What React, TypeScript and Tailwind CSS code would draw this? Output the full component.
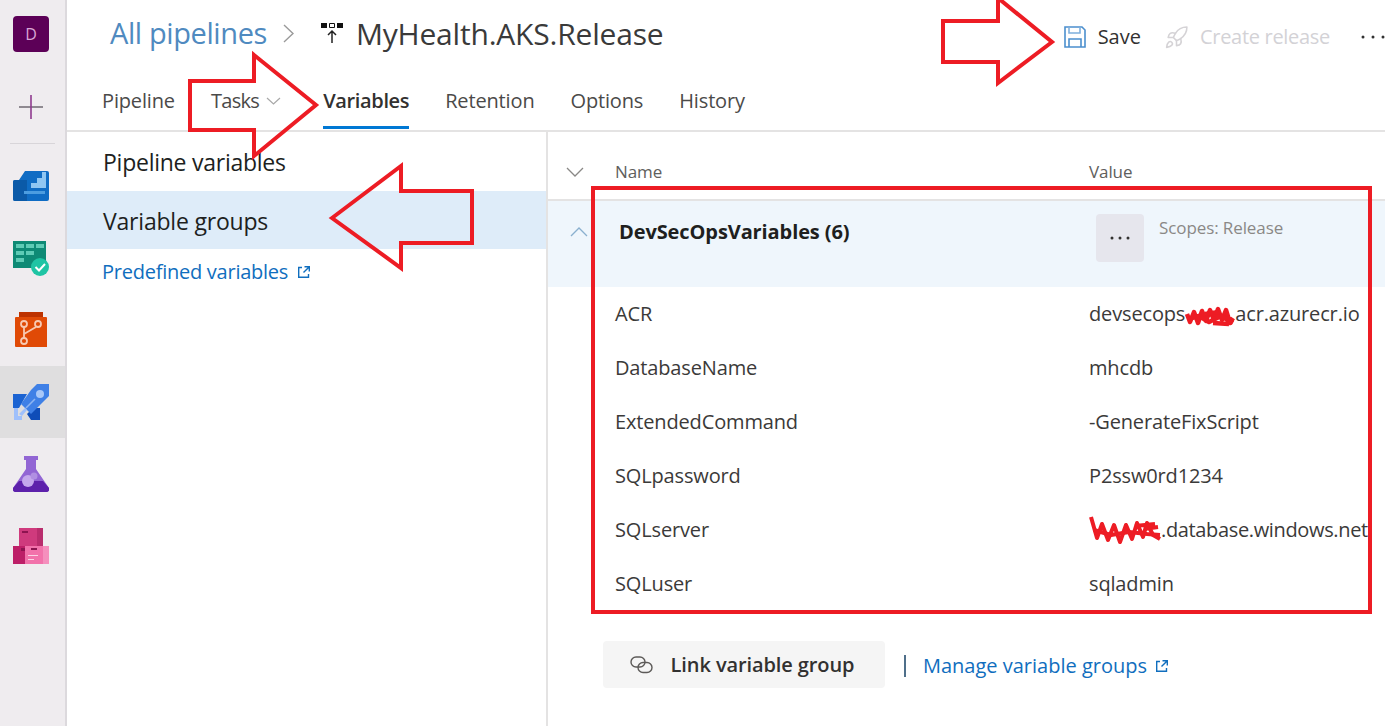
import { Rocket } from "lucide-react";

const rows = [
  {
    name: "ACR",
    value: (
      <>
        devsecops
        <span className="relative inline-block h-[14px] w-[50px]">
          <svg className="absolute left-0 top-[-2px] overflow-visible" width="50" height="22" viewBox="0 0 50 22" fill="none" stroke="#ed1c24" strokeWidth="4.5" strokeLinejoin="round">
            <path d="M2 9L5 17L9 7L13 18L17 6L21 16L25 5L29 15L33 4L37 15L41 5L45 18L48 13" />
            <path d="M3 14L14 11L24 17L36 11L48 18M20 9L34 7M28 18L44 19" />
          </svg>
        </span>
        acr.azurecr.io
      </>
    ),
  },
  { name: "DatabaseName", value: "mhcdb" },
  { name: "ExtendedCommand", value: "-GenerateFixScript" },
  { name: "SQLpassword", value: "P2ssw0rd1234" },
  {
    name: "SQLserver",
    value: (
      <>
        <span className="relative inline-block h-[14px] w-[72px]">
          <svg className="absolute left-0 top-[-8px] overflow-visible" width="72" height="28" viewBox="0 0 72 28" fill="none" stroke="#ed1c24" strokeWidth="4" strokeLinejoin="round">
            <path d="M2 2L8 23L13 9L19 25L25 10L31 27L37 10L43 24L48 8L54 22L58 8L64 20L71 24" />
            <path d="M5 15L22 20L40 17L58 19L71 20M46 11L66 9M55 14L69 12" />
          </svg>
        </span>
        <span className="tracking-[-0.35px]">.database.windows.net</span>
      </>
    ),
  },
  { name: "SQLuser", value: "sqladmin" },
];

function ExternalIcon() {
  return (
    <svg width="14" height="14" viewBox="0 0 14 14" fill="none" stroke="#106ebe" strokeWidth="1.4">
      <path d="M5 2.5H1.7V12.3H11.5V9" />
      <path d="M7.5 1.7H12.3V6.5M12.3 1.7L6.5 7.5" />
    </svg>
  );
}

function SideItem({ active, children }: { active?: boolean; children: React.ReactNode }) {
  return <div className={`flex h-[72px] items-center pl-[13px] ${active ? "bg-[#dfdedf]" : ""}`}>{children}</div>;
}

function Sidebar() {
  return (
    <aside className="flex h-full w-[67px] shrink-0 flex-col border-r-2 border-[#dcd9dd] bg-[#efecef]">
      <div className="flex h-[68px] items-center pl-[13px]">
        <div className="flex h-9 w-9 items-center justify-center rounded bg-[#5c0057] text-[16px] text-[#d9a6d4]">D</div>
      </div>
      <div className="flex h-[74px] items-center pl-[18px] pt-[3px]">
        <svg width="26" height="26" viewBox="0 0 26 26" stroke="#77727a" strokeWidth="1.6">
          <path d="M1 13H25" />
          <path d="M13 1V25" stroke="#8e3a8e" />
        </svg>
      </div>
      <div className="mx-[10px] mt-px h-px bg-[#d8d5d9]" />
      <div className="mt-[6px]">
        <SideItem>
          <svg width="36" height="36" viewBox="0 0 36 36">
            <path d="M6 12L12 3H34a2 2 0 0 1 2 2V31a2 2 0 0 1-2 2H2a2 2 0 0 1-2-2V14a2 2 0 0 1 2-2Z" fill="#0f6cc4" />
            <path d="M0 14a2 2 0 0 1 2-2H14V33H2a2 2 0 0 1-2-2Z" fill="#0b5aa8" />
            <path d="M12 20h6v-5h6v-5h5V4h4v16H12Z" fill="#8fc6f2" />
            <path d="M11 23H32V26H11Z" fill="#4c9de0" />
          </svg>
        </SideItem>
        <SideItem>
          <svg width="36" height="36" viewBox="0 0 36 36">
            <path d="M0 1H33V28H0Z" fill="#0e8a75" />
            <path d="M3 4H11V8H3ZM13 4H21V8H13ZM23 4H31V8H23ZM3 11H11V15H3ZM13 11H21V15H13ZM3 18H11V22H3Z" fill="#5ecbb5" />
            <circle cx="27" cy="27" r="9" fill="#1fc4a4" />
            <path d="M22.5 27L26 30.5L32 24" fill="none" stroke="#fff" strokeWidth="2" />
          </svg>
        </SideItem>
        <SideItem>
          <svg width="36" height="36" viewBox="0 0 36 36">
            <path d="M6 0H30V6H6Z" fill="#bd3200" />
            <path d="M3 5H33a1 1 0 0 1 1 1V35H3a1 1 0 0 1-1-1V6a1 1 0 0 1 1-1Z" fill="#e04a06" />
            <g fill="none" stroke="#f7c9b2" strokeWidth="1.8">
              <circle cx="11" cy="12" r="3" />
              <circle cx="25" cy="12" r="3" />
              <circle cx="11" cy="29" r="3" />
              <path d="M11 15V26M11 22L23 15" />
            </g>
          </svg>
        </SideItem>
        <SideItem active>
          <svg width="36" height="36" viewBox="0 0 36 36">
            <path d="M0 10H14L6 24H0Z" fill="#1b63d2" />
            <path d="M20 24H27V36H18L14 30Z" fill="#0f4db8" />
            <path d="M18 6L24 0H36V12L18 30L8 20Z" fill="#3f80e6" />
            <circle cx="27" cy="10" r="4" fill="#a9c8f8" />
            <path d="M13 24L22 15" stroke="#8db4f2" strokeWidth="1.6" />
            <path d="M1 24V36H9V32H5V24ZM6 30L12 24L14 26L9 32Z" fill="#9fc0fb" />
          </svg>
        </SideItem>
        <SideItem>
          <svg width="36" height="36" viewBox="0 0 36 36">
            <path d="M11 0H25V4H23V13L36 32a3 3 0 0 1-2 4H2a3 3 0 0 1-2-4L13 13V4H11Z" fill="#9266d4" />
            <path d="M6 25H30L36 32a3 3 0 0 1-2 4H2a3 3 0 0 1-2-4Z" fill="#5d21ab" />
            <circle cx="15" cy="25" r="6" fill="#c4a8ec" />
            <circle cx="21" cy="20" r="3.5" fill="#b08fe2" />
          </svg>
        </SideItem>
        <SideItem>
          <svg width="36" height="36" viewBox="0 0 36 36">
            <path d="M6 0H30V18H6Z" fill="#cf3a7d" />
            <path d="M24 0H30V18H24Z" fill="#b92d6d" />
            <path d="M0 18H12V36H0Z" fill="#bd1f68" />
            <path d="M12 18H36V36H12Z" fill="#f272ab" />
            <path d="M30 18H36V36H30Z" fill="#f58fbd" />
            <path d="M9 3H15V5H9ZM8 20H12V23H8ZM18 20H24V22H18Z" fill="#8d1450" />
            <path d="M15 27H25V28H15ZM15 31H21V32H15Z" fill="#fbd3e5" />
          </svg>
        </SideItem>
      </div>
    </aside>
  );
}

function Header() {
  return (
    <header className="border-b-2 border-[#e4e3e3]">
      <div className="flex h-[68px] items-center pb-[2px] pl-[43px]">
        <span className="text-[29px] tracking-[-0.4px] text-[#4f8ac0]">All pipelines</span>
        <svg className="ml-[16px]" width="11" height="19" viewBox="0 0 11 19" fill="none" stroke="#9a9a9a" strokeWidth="1.4">
          <path d="M1 1L10 9.5L1 18" />
        </svg>
        <svg className="ml-[27px]" width="22" height="22" viewBox="0 0 22 22">
          <path d="M0 1H6V6H0ZM16 1H22V6H16Z" fill="#111" />
          <path d="M8.5 1.5H13.5V5.5H8.5Z" fill="none" stroke="#111" />
          <path d="M11 9V21M7 13L11 9L15 13" fill="none" stroke="#222" strokeWidth="1.5" />
        </svg>
        <span className="ml-[13px] text-[30px] tracking-[-0.2px] text-[#3a3a3a]">MyHealth.AKS.Release</span>
        <div className="ml-auto mt-[8px] flex items-center">
          <svg width="22" height="22" viewBox="0 0 22 22" fill="none" stroke="#4b8fce" strokeWidth="1.6">
            <path d="M1 1H18L21 4V21H1Z" />
            <path d="M5 1V7H16V1" stroke="#7fb0dd" />
            <path d="M5 21V13H17V21" />
          </svg>
          <span className="ml-[12px] text-[20px] text-[#323130]">Save</span>
          <Rocket className="ml-[23px] text-[#d5d3d6]" size={25} strokeWidth={1.5} />
          <span className="ml-[11px] text-[20px] tracking-[-0.3px] text-[#d3d2d6]">Create release</span>
          <svg className="ml-[31px]" width="24" height="4" viewBox="0 0 24 4" fill="#333">
            <circle cx="2" cy="2" r="1.5" />
            <circle cx="12" cy="2" r="1.5" />
            <circle cx="22" cy="2" r="1.5" />
          </svg>
        </div>
      </div>
      <nav className="flex h-[62px] items-start gap-[36px] pl-[35px] pt-[18px] text-[20px] tracking-[-0.15px] text-[#4b4a49]">
        <span>Pipeline</span>
        <span className="flex items-center gap-[7px]">
          <span className="tracking-[-0.7px]">Tasks</span>
          <svg width="15" height="8" viewBox="0 0 15 8" fill="none" stroke="#a8a8a8" strokeWidth="1.2">
            <path d="M1 1L7.5 7L14 1" />
          </svg>
        </span>
        <span className="relative ml-[6px] font-semibold tracking-[-0.35px] text-[#323130]">
          Variables
          <span className="absolute inset-x-0 top-[40px] h-[3px] bg-[#0078d4]" />
        </span>
        <span>Retention</span>
        <span>Options</span>
        <span>History</span>
      </nav>
    </header>
  );
}

function LeftNav() {
  return (
    <div className="w-[481px] shrink-0 border-r-2 border-[#e4e3e3]">
      <div className="flex h-[59px] items-center pl-[36px] pt-[2px] text-[23px] tracking-[-0.25px] text-[#201f1e]">Pipeline variables</div>
      <div className="flex h-[58px] items-center bg-[#deecf9] pl-[36px] pt-[2px] text-[23px] tracking-[-0.2px] text-[#201f1e]">Variable groups</div>
      <div className="mt-[8px] flex items-center gap-[9px] pl-[35px] text-[20px] tracking-[-0.25px] text-[#106ebe]">
        Predefined variables
        <ExternalIcon />
      </div>
    </div>
  );
}

function VariablesTable() {
  return (
    <div className="min-w-0 flex-1">
      <div className="flex h-[69px] items-center border-b-2 border-[#e4e3e3] pt-[13px]">
        <svg className="ml-[18px]" width="18" height="10" viewBox="0 0 18 10" fill="none" stroke="#8a8886" strokeWidth="1.3">
          <path d="M1 1L9 9L17 1" />
        </svg>
        <span className="ml-[31px] w-[474px] text-[17px] tracking-[-0.1px] text-[#605e5c]">Name</span>
        <span className="text-[17px] tracking-[-0.1px] text-[#605e5c]">Value</span>
      </div>
      <div className="flex h-[86px] bg-[#eff6fc]">
        <svg className="ml-[22px] mt-[26px]" width="18" height="10" viewBox="0 0 18 10" fill="none" stroke="#8ab0cf" strokeWidth="1.3">
          <path d="M1 9L9 1L17 9" />
        </svg>
        <span className="ml-[31px] mt-[16px] w-[477px] text-[20px] font-bold tracking-[-0.1px] text-[#201f1e]">DevSecOpsVariables (6)</span>
        <div className="mt-[13px] flex h-[48px] w-[48px] items-center justify-center rounded bg-[#e6e6ed]">
          <svg width="20" height="4" viewBox="0 0 20 4" fill="#323130">
            <circle cx="2" cy="2" r="1.5" />
            <circle cx="10" cy="2" r="1.5" />
            <circle cx="18" cy="2" r="1.5" />
          </svg>
        </div>
        <span className="ml-[15px] mt-[14px] text-[17px] tracking-[-0.1px] text-[#8a8886]">Scopes: Release</span>
      </div>
      {rows.map((r) => (
        <div key={r.name} className="flex h-[54px] items-center text-[20px] tracking-[-0.15px] text-[#3b3a39]">
          <span className="ml-[67px] w-[474px]">{r.name}</span>
          <span className="whitespace-nowrap">{r.value}</span>
        </div>
      ))}
      <div className="mt-[30px] flex items-center">
        <button className="ml-[55px] flex h-[47px] w-[282px] items-center justify-center gap-[18px] rounded-sm bg-[#f5f5f5] pr-[4px] text-[20px] font-semibold tracking-[-0.1px] text-[#323130]">
          <svg width="23" height="18" viewBox="0 0 23 18" fill="none" stroke="#5c5a58" strokeWidth="1.4">
            <rect x="1" y="1" width="14" height="10" rx="5" />
            <rect x="8" y="6.5" width="14" height="10" rx="5" />
          </svg>
          Link variable group
        </button>
        <span className="ml-[19px] mt-[2px] h-[22px] w-[2px] bg-[#4f6f8a]" />
        <span className="ml-[17px] mt-[3px] flex items-center gap-[8px] text-[20px] text-[#106ebe]">
          Manage variable groups
          <ExternalIcon />
        </span>
      </div>
    </div>
  );
}

function Annotations() {
  return (
    <>
      <svg className="pointer-events-none absolute left-0 top-0 h-[726px] w-[1385px]" viewBox="0 0 1385 726" fill="none" stroke="#ed1c24" strokeWidth="4">
        <path d="M190 81H254V55L316 105L254 156V130H190Z" />
        <path d="M943 21H998V-2L1052 42L998 83V62H943Z" />
        <path d="M332 218L401 166V191H472V243H401V268Z" />
      </svg>
      <div className="pointer-events-none absolute left-[591px] top-[186px] h-[428px] w-[781px] border-[4px] border-[#ed1c24]" />
    </>
  );
}

export default function App() {
  return (
    <div className="relative flex h-[726px] w-[1385px] overflow-hidden bg-white font-['Open_Sans',sans-serif]">
      <Sidebar />
      <main className="flex min-w-0 flex-1 flex-col">
        <Header />
        <div className="flex flex-1">
          <LeftNav />
          <VariablesTable />
        </div>
      </main>
      <Annotations />
    </div>
  );
}
